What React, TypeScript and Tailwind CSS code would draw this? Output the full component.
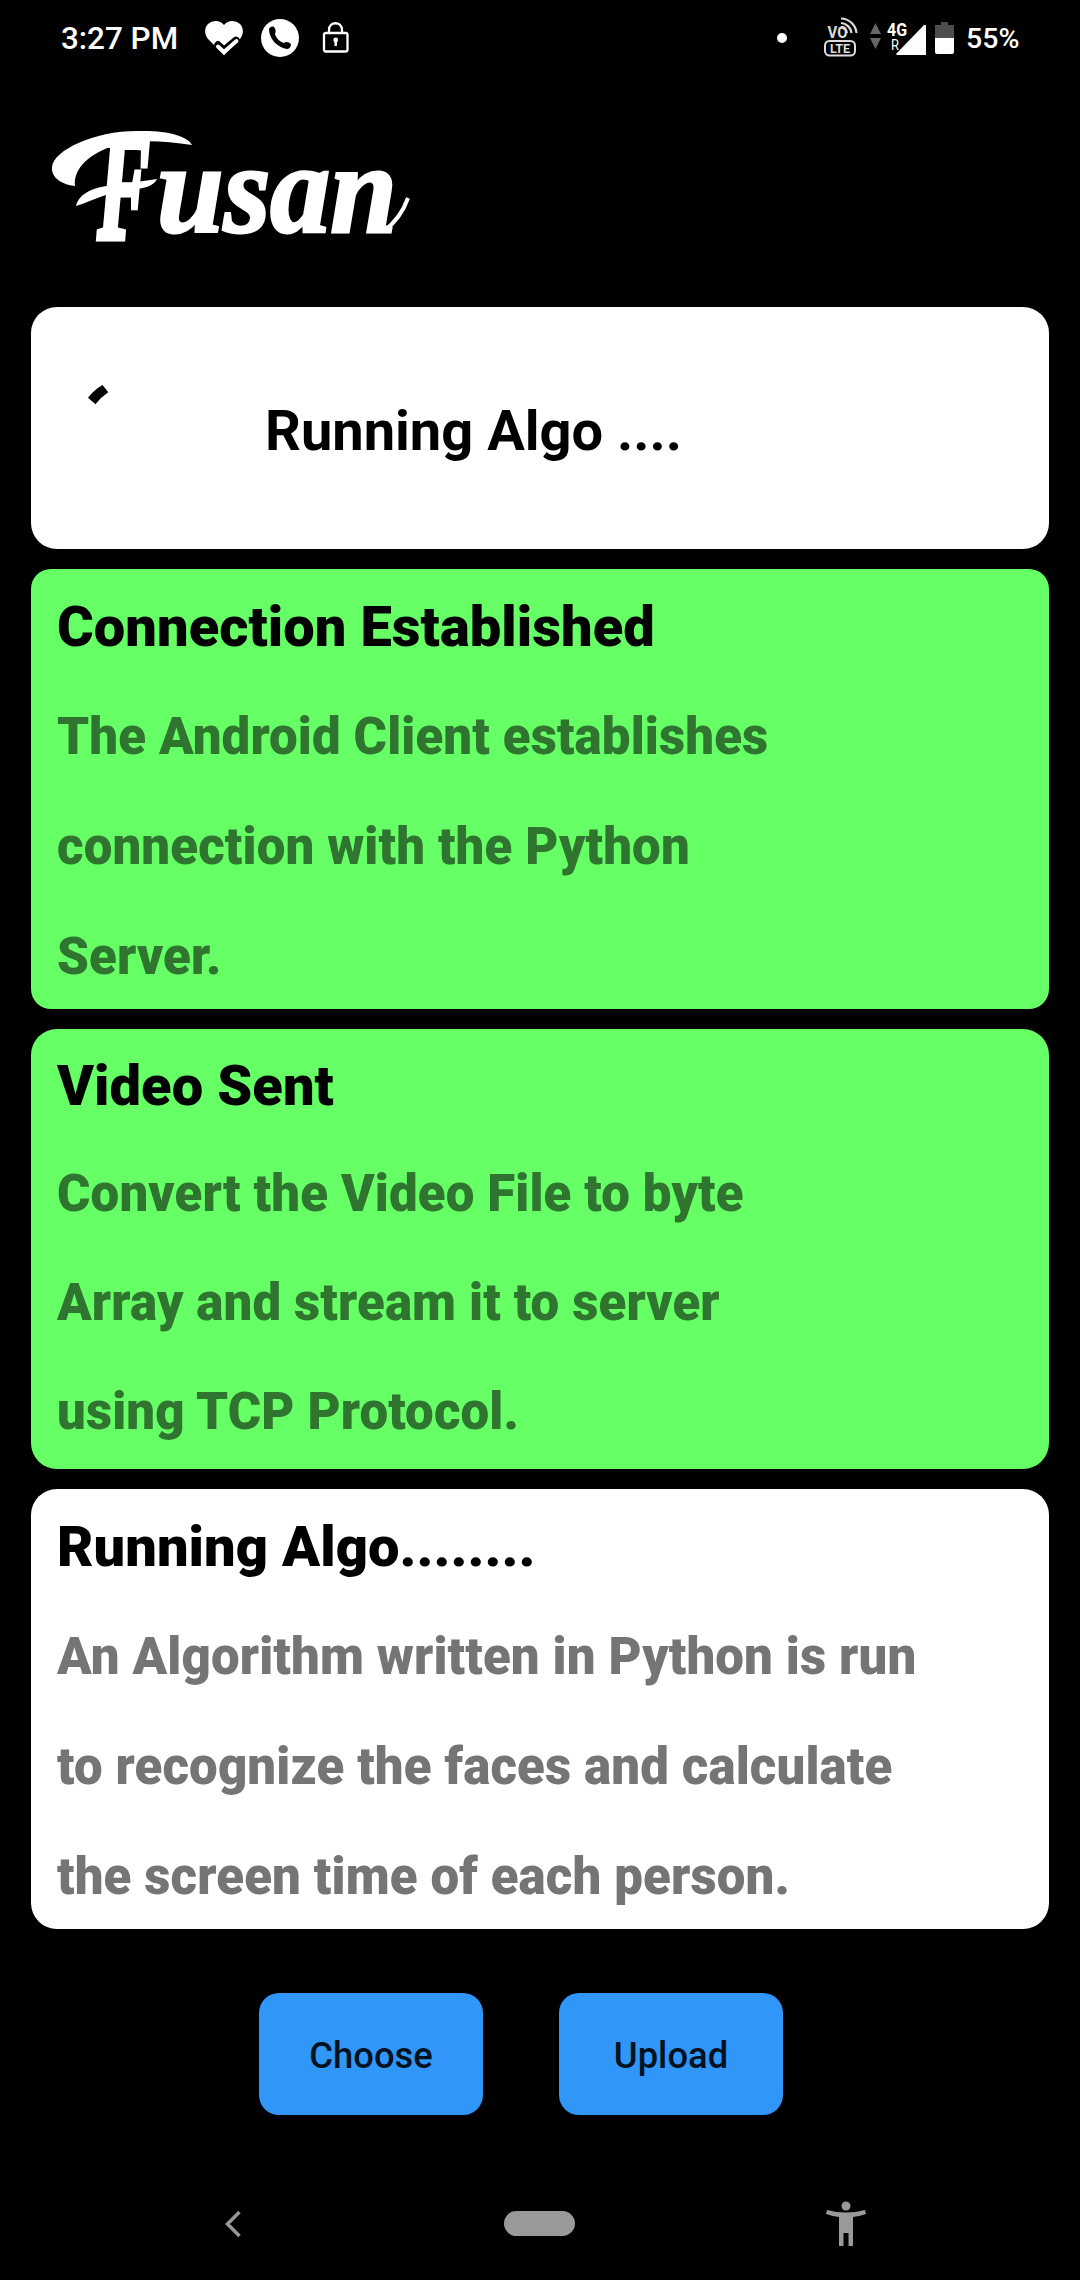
import React from "react";

function Card({ title, lines, tone, radius, head, gap }: { title: string; lines: string[]; tone: string; radius: string; head: string; gap: string }) {
  return (
    <section className={`h-[440px] w-full shrink-0 pl-[26px] ${tone} ${radius}`}>
      <h2 className={`text-[56px] leading-[66px] font-black tracking-[0.06px] text-black ${head}`}>{title}</h2>
      <div className={`text-[51px] font-black tracking-[0.13px] ${gap}`}>
        {lines.map((l) => (
          <p key={l} className="whitespace-nowrap">{l}</p>
        ))}
      </div>
    </section>
  );
}

function StatusBar() {
  return (
    <header className="flex h-[76px] shrink-0 items-center pl-[61px] text-white">
      <span className="w-[139px] pt-[1px] text-[31.4px] leading-[38px] font-medium whitespace-nowrap">3:27 PM</span>
      <svg className="ml-[5px]" width="38" height="34" viewBox="0 0 38 34">
        <path d="M19 34 L4 19 C-1 14-1 7 3 3 C8-1 15-1 19 4 C23-1 30-1 35 3 C39 7 39 14 34 19 Z" fill="#fff" />
        <path d="M13 24 L19 29.500 L31 19.500" stroke="#000" strokeWidth="7.500" fill="none" strokeLinejoin="round" strokeLinecap="round" />
        <path d="M13 25.500 L19 31 L31.500 20" stroke="#fff" strokeWidth="4" fill="none" strokeLinecap="round" />
        <path d="M12 27 L19 34 L26 27 L19 31Z" fill="#fff" />
      </svg>
      <svg className="ml-[18px]" width="38" height="38" viewBox="0 0 38 38">
        <circle cx="19" cy="19" r="19" fill="#fff" />
        <path d="M8 10 C9 8 11 7 13 8 C15 10 15 13 14 15 C15 19 19 23 23 24 C25 22 28 23 30 25 C30 28 28 30 26 30 C17 29 8 20 8 10Z" fill="#000" />
      </svg>
      <svg className="ml-[23px]" width="28" height="32" viewBox="0 0 28 32" fill="none" stroke="#fff" strokeWidth="2.300">
        <rect x="2" y="11" width="23.500" height="18.500" rx="2" />
        <path d="M7 11 V8 C7-1 20-1 20 8 V11" />
        <circle cx="13.700" cy="18" r="2.400" fill="#fff" stroke="none" />
        <path d="M13.700 18 V24" strokeWidth="2.500" />
      </svg>
      <span className="ml-[427px] size-[10px] rounded-full bg-white" />
      <svg className="ml-[36px]" width="36" height="42" viewBox="0 0 36 42" fill="none" stroke="#ddd">
        <text x="4.500" y="21" fontSize="16" fontFamily="Roboto" fontWeight="700" fill="#ddd" stroke="none" textLength="20" lengthAdjust="spacingAndGlyphs">VO</text>
        <path d="M18 1.500 A16 16 0 0 1 33.500 16 M18 6 A11.500 11.500 0 0 1 28.500 16 M18 10.500 A7 7 0 0 1 24 16" strokeWidth="2.200" />
        <rect x="2" y="24" width="30" height="14.500" rx="4.500" strokeWidth="2" />
        <text x="7" y="36" fontSize="12.500" fontFamily="Roboto" fontWeight="700" fill="#ddd" stroke="none" textLength="20">LTE</text>
      </svg>
      <svg className="ml-[11px]" width="60" height="38" viewBox="0 0 60 38">
        <path d="M0 15 L5.500 4 L11 15Z M0 19 H11 L5.500 30Z" fill="#666" />
        <path d="M26 35 L54 6 H56 V36 H27Z" fill="#fff" />
        <text x="17" y="17" fontSize="18" fontFamily="Roboto" fontWeight="700" fill="#fff" stroke="#000" strokeWidth="2" paintOrder="stroke" textLength="20" lengthAdjust="spacingAndGlyphs">4G</text>
        <text x="21" y="31" fontSize="14" fontFamily="Roboto" fill="#fff" textLength="8" lengthAdjust="spacingAndGlyphs">R</text>
      </svg>
      <svg className="ml-[5px]" width="19" height="32" viewBox="0 0 19 32">
        <path d="M6 0 H13 V3 H19 V16 H0 V3 H6Z" fill="#4d4d4d" />
        <path d="M0 16 H19 V30 Q19 32 17 32 H2 Q0 32 0 30Z" fill="#fff" />
      </svg>
      <span className="ml-[12px] pt-[2px] text-[28.5px] leading-[34px] font-medium">55%</span>
    </header>
  );
}

export default function App() {
  return (
    <main className="flex h-[2280px] w-[1080px] flex-col bg-black font-['Roboto',sans-serif]">
      <StatusBar />
      <div className="h-[231px] shrink-0 pl-[40px]">
        <svg className="block" width="400" height="220" viewBox="40 76 400 220" fill="#fff" role="img" aria-label="Fusan">
          <path d="M75 186 C58 184 51 175 52 167 C54 150 94 131 137 131 C167 130 188 136 192 145 C164 141 139 139 116 145 C90 153 73 168 75 186Z" />
          <path d="M76 206 C79 193 95 186 116 185 L157 179 C154 186 143 189 132 189 C110 191 95 200 76 206Z" />
          <g transform="translate(98 238) scale(0.51 1)">
            <text fontSize="152" fontFamily="Liberation Serif" fontStyle="italic" fontWeight="700" stroke="#fff" strokeWidth="7">F</text>
          </g>
          <text x="157" y="232" fontSize="128" fontFamily="Liberation Serif" fontStyle="italic" fontWeight="700" textLength="240" lengthAdjust="spacingAndGlyphs" stroke="#fff" strokeWidth="3">usan</text>
          <path d="M384 231 Q401 218 408 198" fill="none" stroke="#fff" strokeWidth="4" />
        </svg>
      </div>
      <div className="flex flex-col gap-[20px] px-[31px]">
        <section className="flex h-[242px] items-center rounded-[26px] bg-white">
          <svg className="ml-[50px]" width="100" height="100" viewBox="0 0 100 100">
            <path d="M7 18.700 Q13 11 21.500 6 L27.300 13.300 Q20 18 14.500 25.300Z" fill="#000" transform="translate(0 1)" />
          </svg>
          <p className="ml-[84px] pt-[6px] text-[56px] leading-[66px] font-bold text-black">Running Algo ....</p>
        </section>
        <Card tone="bg-[#66ff66] text-[#2f752f]" radius="rounded-[20px]" head="pt-[25px]" gap="mt-[22px] leading-[110px]" title="Connection Established" lines={["The Android Client establishes", "connection with the Python", "Server."]} />
        <Card tone="bg-[#66ff66] text-[#2f752f]" radius="rounded-[26px]" head="pt-[24px]" gap="mt-[20px] leading-[109px]" title="Video Sent" lines={["Convert the Video File to byte", "Array and stream it to server", "using TCP Protocol."]} />
        <Card tone="bg-white text-[#757575]" radius="rounded-[26px]" head="pt-[25px]" gap="mt-[22px] leading-[110px]" title="Running Algo........" lines={["An Algorithm written in Python is run", "to recognize the faces and calculate", "the screen time of each person."]} />
      </div>
      <div className="mt-[64px] flex shrink-0 gap-[76px] pl-[259px] text-[36.4px] font-medium text-[#04121f]">
        <button className="h-[122px] w-[224px] rounded-[20px] bg-[#3096f8] pt-[4px]">Choose</button>
        <button className="h-[122px] w-[224px] rounded-[20px] bg-[#3096f8] pt-[4px]">Upload</button>
      </div>
      <nav className="mt-[85px] flex items-start pl-[225px]">
        <svg className="mt-[10px]" width="17" height="28" viewBox="0 0 17 28" fill="none" stroke="#999" strokeWidth="3.500">
          <path d="M14.500 2 L2.500 14 L14.500 26" />
        </svg>
        <span className="mt-[11px] ml-[262px] h-[25px] w-[71px] rounded-full bg-[#999]" />
        <svg className="ml-[250px]" width="42" height="48" viewBox="0 0 42 48" fill="#999">
          <circle cx="21" cy="6" r="4.500" />
          <path d="M2 10 Q21 15 40 10 L41 14 Q34 16.500 28 17 V46 H23.500 V33 H18.500 V46 H14 V17 Q8 16.500 1 14Z" />
        </svg>
      </nav>
    </main>
  );
}
